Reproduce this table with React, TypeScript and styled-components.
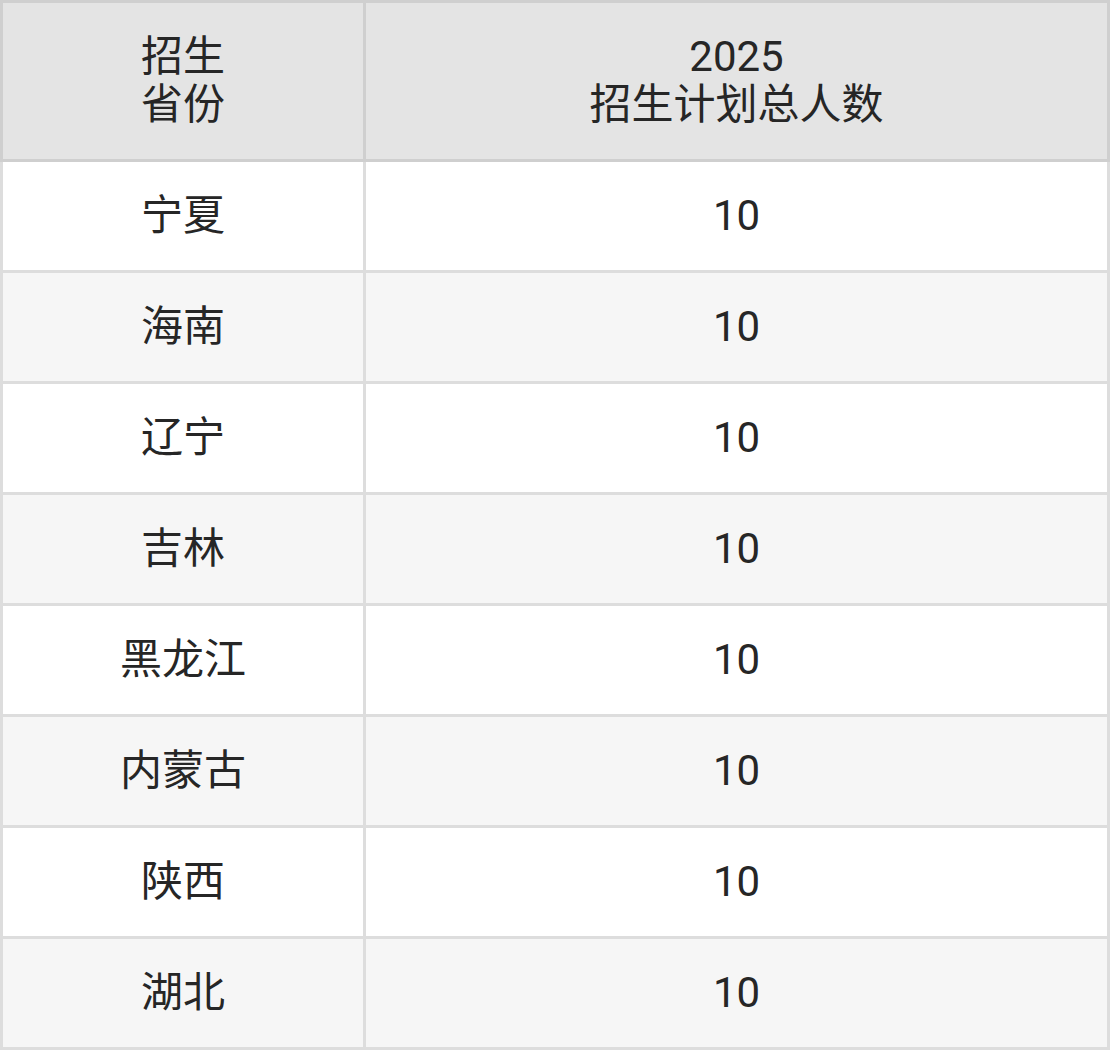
import styled, { createGlobalStyle } from "styled-components";

const GlobalStyle = createGlobalStyle`
  html, body {
    margin: 0;
    padding: 0;
    background: #ffffff;
  }
`;

const Table = styled.table`
  width: 1110px;
  border-collapse: separate;
  border-spacing: 0;
  table-layout: fixed;
  font-family: Roboto, "Noto Sans CJK SC", sans-serif;
  font-size: 42px;
  line-height: 48px;
  color: #262626;
`;

const HeadCell = styled.th<{ $first?: boolean }>`
  height: 156px;
  padding: 0;
  font-weight: 400;
  text-align: center;
  vertical-align: middle;
  background: #e4e4e4;
  border-top: 3px solid #cfcfcf;
  border-bottom: 3px solid #cfcfcf;
  border-right: 3px solid #cfcfcf;
  border-left: ${(p) => (p.$first ? "3px solid #cfcfcf" : "none")};
`;

const Row = styled.tr<{ $striped: boolean }>`
  background: ${(p) => (p.$striped ? "#f6f6f6" : "#ffffff")};
`;

const Cell = styled.td<{ $first?: boolean }>`
  height: 108px;
  padding: 0;
  text-align: center;
  vertical-align: middle;
  border-bottom: 3px solid #dddddd;
  border-right: 3px solid #dddddd;
  border-left: ${(p) => (p.$first ? "3px solid #dddddd" : "none")};
`;

const rows = [
  { province: "宁夏", total: 10 },
  { province: "海南", total: 10 },
  { province: "辽宁", total: 10 },
  { province: "吉林", total: 10 },
  { province: "黑龙江", total: 10 },
  { province: "内蒙古", total: 10 },
  { province: "陕西", total: 10 },
  { province: "湖北", total: 10 },
];

export default function App() {
  return (
    <>
      <GlobalStyle />
      <Table>
        <colgroup>
          <col style={{ width: 366 }} />
          <col style={{ width: 744 }} />
        </colgroup>
        <thead>
          <tr>
            <HeadCell $first>
              招生
              <br />
              省份
            </HeadCell>
            <HeadCell>
              2025
              <br />
              招生计划总人数
            </HeadCell>
          </tr>
        </thead>
        <tbody>
          {rows.map((r, i) => (
            <Row key={r.province} $striped={i % 2 === 1}>
              <Cell $first>{r.province}</Cell>
              <Cell>{r.total}</Cell>
            </Row>
          ))}
        </tbody>
      </Table>
    </>
  );
}
